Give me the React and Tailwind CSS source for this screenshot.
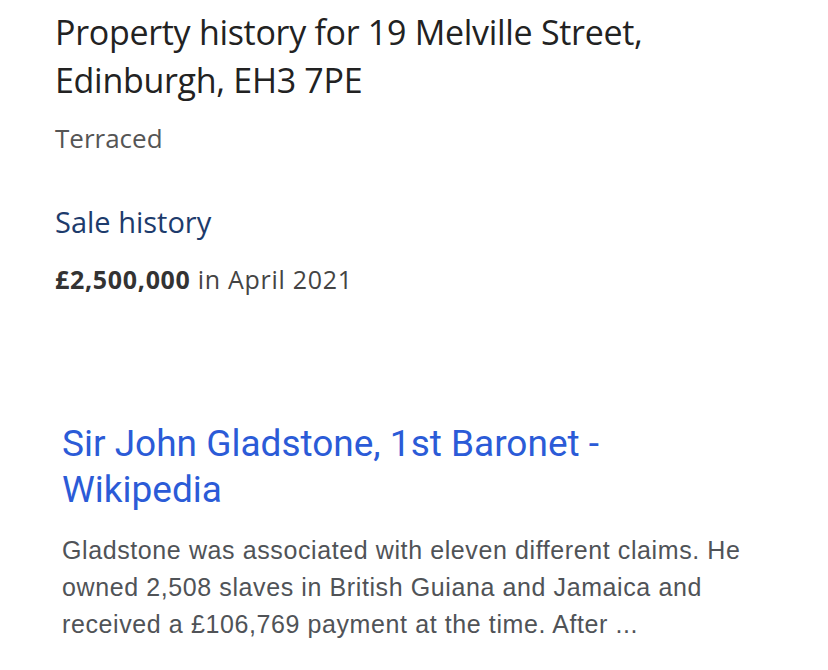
export default function App() {
  return (
    <div className="w-[828px] h-[670px] bg-white overflow-hidden">
      <div className="pl-[55px] pt-[8px]">
        <h1 className="text-[34px] leading-[48px] text-[#222222] font-['Open_Sans',sans-serif] tracking-[-0.3px]">
          Property history for 19 Melville Street,
          <br />
          Edinburgh, EH3 7PE
        </h1>
        <div className="mt-[18px] text-[26px] leading-[32px] text-[#555555] font-['Open_Sans',sans-serif]">
          Terraced
        </div>
        <div className="mt-[50px] text-[29px] leading-[36px] text-[#1d3b6c] font-['Open_Sans',sans-serif]">
          Sale history
        </div>
        <div className="mt-[23px] text-[25px] leading-[32px] tracking-[0.7px] text-[#444444] font-['Open_Sans',sans-serif]">
          <span className="font-bold text-[#333333]">£2,500,000</span> in April 2021
        </div>
      </div>
      <div className="pl-[62px] mt-[126px]">
        <div className="text-[37px] leading-[46px] text-[#2b5bd7] font-['Roboto',sans-serif]">
          Sir John Gladstone, 1st Baronet -
          <br />
          Wikipedia
        </div>
        <div className="mt-[19px] w-[700px] text-[25px] leading-[37px] tracking-[0.6px] text-[#505357] font-['Liberation_Sans',Arial,sans-serif]">
          Gladstone was associated with eleven different claims. He owned 2,508 slaves in British Guiana and Jamaica and received a £106,769 payment at the time. After ...
        </div>
      </div>
    </div>
  );
}
